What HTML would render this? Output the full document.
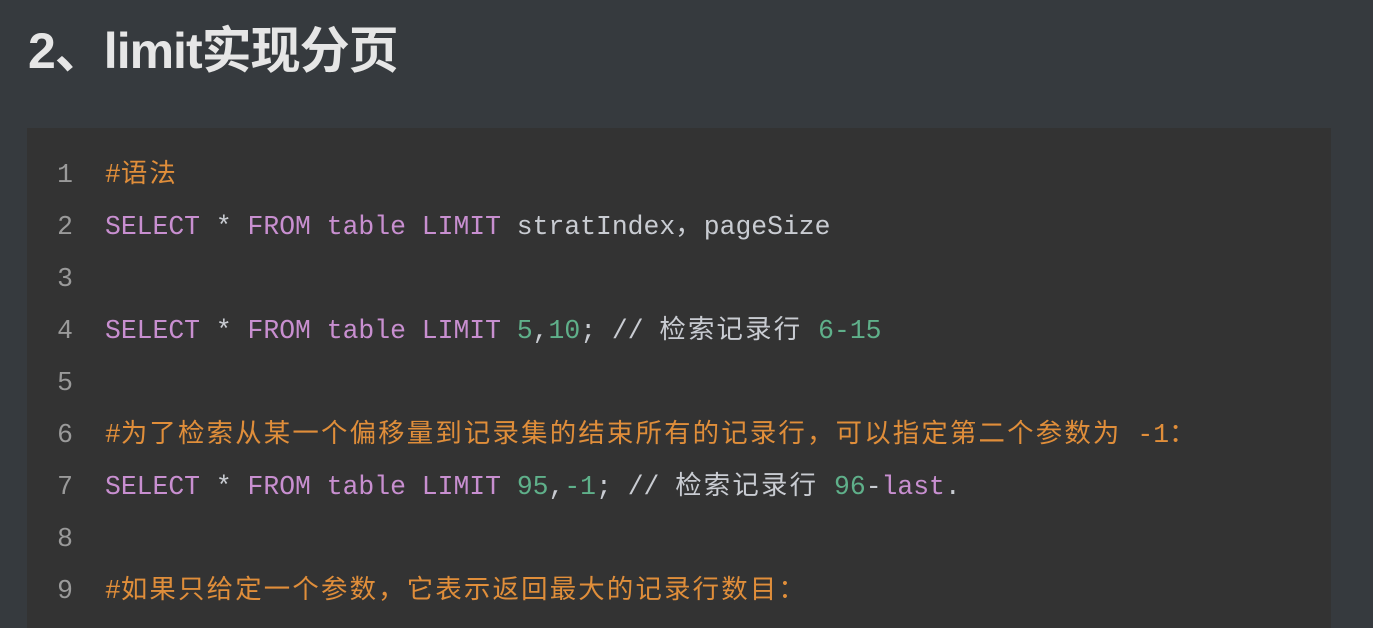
<!DOCTYPE html>
<html><head><meta charset="utf-8"><style>
body{margin:0;background:#363a3e;width:1373px;height:623px;overflow:hidden;font-family:"Liberation Sans","Noto Sans CJK SC",sans-serif}
h2{position:absolute;left:28px;top:20px;margin:0;font-size:50px;line-height:62px;color:#e6e6e6;font-weight:bold;letter-spacing:-1px}
.code{position:absolute;left:27px;top:128px;width:1304px;height:500px;background:#333333}
.ln{position:absolute;left:0;width:76px;text-align:center;font-family:"Liberation Mono",monospace;font-size:26.4px;color:#9a9a9a;line-height:52px}
.l{position:absolute;left:78px;white-space:pre;font-family:"Liberation Mono","Noto Sans CJK SC",monospace;font-size:26.4px;line-height:52px;color:#c9ccd2}
.k{color:#c88fd0}.n{color:#5fb08a}.c{color:#e08e3a}
.z{letter-spacing:2.2px}
</style></head><body>
<h2>2、limit实现分页</h2>
<div class="code">
<div class="ln" style="top:21px">1</div>
<div class="ln" style="top:73px">2</div>
<div class="ln" style="top:125px">3</div>
<div class="ln" style="top:177px">4</div>
<div class="ln" style="top:229px">5</div>
<div class="ln" style="top:281px">6</div>
<div class="ln" style="top:333px">7</div>
<div class="ln" style="top:385px">8</div>
<div class="ln" style="top:437px">9</div>
<div class="l c" style="top:21px">#<span class="z">语法</span></div>
<div class="l" style="top:73px"><span class="k">SELECT</span> * <span class="k">FROM</span> <span class="k">table</span> <span class="k">LIMIT</span> stratIndex<span class="z">，</span>pageSize</div>
<div class="l" style="top:177px"><span class="k">SELECT</span> * <span class="k">FROM</span> <span class="k">table</span> <span class="k">LIMIT</span> <span class="n">5</span>,<span class="n">10</span>; // <span class="z">检索记录行</span> <span class="n">6-15</span></div>
<div class="l c" style="top:281px">#<span class="z">为了检索从某一个偏移量到记录集的结束所有的记录行，可以指定第二个参数为</span> -1<span class="z">：</span></div>
<div class="l" style="top:333px"><span class="k">SELECT</span> * <span class="k">FROM</span> <span class="k">table</span> <span class="k">LIMIT</span> <span class="n">95</span>,<span class="n">-1</span>; // <span class="z">检索记录行</span> <span class="n">96</span>-<span class="k">last</span>.</div>
<div class="l c" style="top:437px">#<span class="z">如果只给定一个参数，它表示返回最大的记录行数目：</span></div>
</div>
</body></html>
